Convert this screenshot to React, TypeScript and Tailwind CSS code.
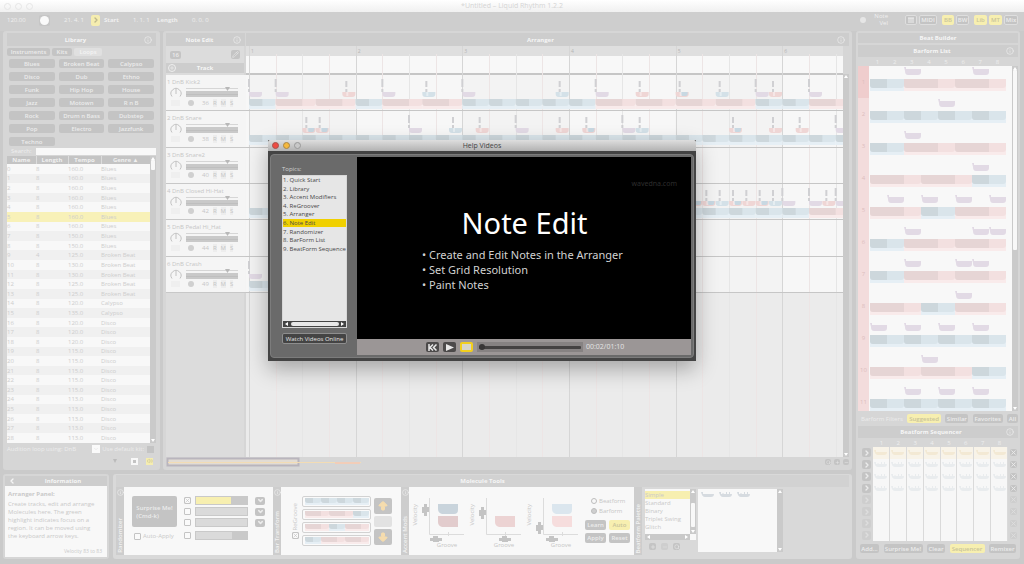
import React from 'react'

import { clsx } from 'clsx'
import {
  ArrowBigDown,
  ArrowBigUp,
  ChevronDown,
  ChevronLeft,
  ChevronRight,
  Info,
  Minus,
  Pencil,
  Plus,
  Search,
  Volume2,
  X,
} from 'lucide-react'

type Tone = 'blue' | 'red'
type NoteTone = 'purple' | 'blue' | 'red' | 'mix'
// start, length, tone
type Bar = [number, number, Tone]
type Note = [number, NoteTone]

interface ITrack {
  name: string
  channel: number
  color: string
  bars: Bar[]
  notes: Note[]
}

interface IBarform {
  bars: Bar[]
  notes: number[]
}

const GENRES = [
  'Blues', 'Broken Beat', 'Calypso', 'Disco', 'Dub', 'Ethno', 'Funk', 'Hip Hop', 'House', 'Jazz',
  'Motown', 'R n B', 'Rock', 'Drum n Bass', 'Dubstep', 'Pop', 'Electro', 'Jazzfunk', 'Techno',
]

const LOOPS: [string, string, string][] = [
  ...Array.from({ length: 7 }, () => ['8', '160.0', 'Blues'] as [string, string, string]),
  ['8', '150.0', 'Blues'],
  ['8', '150.0', 'Blues'],
  ['4', '125.0', 'Broken Beat'],
  ['8', '130.0', 'Broken Beat'],
  ['8', '130.0', 'Broken Beat'],
  ['8', '125.0', 'Broken Beat'],
  ['8', '125.0', 'Broken Beat'],
  ['8', '120.0', 'Calypso'],
  ['8', '135.0', 'Calypso'],
  ['8', '120.0', 'Disco'],
  ['8', '120.0', 'Disco'],
  ['8', '120.0', 'Disco'],
  ...Array.from({ length: 5 }, () => ['8', '115.0', 'Disco'] as [string, string, string]),
  ...Array.from({ length: 5 }, () => ['8', '113.0', 'Disco'] as [string, string, string]),
]

const blues = (count: number): Bar[] => Array.from({ length: count }, (_, i) => [i * 2, 2, 'blue'])

const TRACKS: ITrack[] = [
  {
    name: '1 DnB Kick2',
    channel: 36,
    color: 'bg-[#d6d5e2]',
    bars: [
      [0, 2, 'blue'], [2, 3, 'red'], [5, 3, 'red'], [8, 2, 'blue'], [10, 3, 'red'], [13, 3, 'red'],
      [16, 2, 'blue'], [18, 2, 'blue'], [20, 2, 'blue'], [22, 2, 'blue'], [24, 2, 'blue'],
      [26, 3, 'red'], [29, 3, 'red'], [32, 3, 'red'], [35, 3, 'red'], [38, 2, 'blue'],
      [40, 2, 'blue'], [42, 3, 'red'],
    ],
    notes: [
      [0, 'purple'], [2, 'purple'], [7, 'red'], [10, 'purple'], [13, 'blue'], [16, 'purple'],
      [23, 'blue'], [26, 'purple'], [29, 'red'], [32, 'mix'], [35, 'blue'], [38, 'purple'],
      [39, 'red'], [42, 'purple'],
    ],
  },
  {
    name: '2 DnB Snare',
    channel: 38,
    color: 'bg-[#e9cfcf]',
    bars: blues(23),
    notes: [
      [4, 'mix'], [5, 'mix'], [12, 'purple'], [15, 'blue'], [17, 'red'], [20, 'purple'],
      [23, 'red'], [25, 'mix'], [28, 'purple'], [29, 'blue'], [36, 'mix'], [39, 'red'],
      [41, 'red'], [44, 'purple'],
    ],
  },
  { name: '3 DnB Snare2', channel: 40, color: 'bg-[#e5cccc]', bars: [], notes: [] },
  {
    name: '4 DnB Closed Hi-Hat',
    channel: 42,
    color: 'bg-[#f5efb8]',
    bars: [...blues(21), [42, 3, 'red']],
    notes: [
      [33, 'mix'], [34, 'mix'], [35, 'blue'], [36, 'mix'], [37, 'red'], [38, 'mix'], [39, 'blue'],
      [40, 'purple'], [42, 'purple'], [43, 'red'], [44, 'purple'],
    ],
  },
  { name: '5 DnB Pedal Hi_Hat', channel: 44, color: 'bg-[#f5efb8]', bars: [], notes: [] },
  { name: '6 DnB Crash', channel: 49, color: 'bg-[#f3cfc4]', bars: [[0, 2, 'blue']], notes: [[0, 'purple']] },
]

const BARFORMS: IBarform[] = [
  { bars: [[0, 2, 'blue'], [2, 3, 'red'], [5, 3, 'red']], notes: [2, 6] },
  { bars: blues(4), notes: [4] },
  { bars: [[0, 2, 'blue'], [2, 3, 'red'], [5, 3, 'red']], notes: [2] },
  { bars: [[0, 3, 'red'], [3, 3, 'red'], [6, 2, 'blue']], notes: [6] },
  { bars: [[0, 3, 'red'], [3, 2, 'blue'], [5, 3, 'red']], notes: [1, 3, 5, 7] },
  { bars: [[0, 2, 'blue'], [2, 3, 'red'], [5, 3, 'red']], notes: [2, 6, 7] },
  { bars: [[0, 2, 'blue'], [2, 3, 'red'], [5, 3, 'red']], notes: [2, 5, 6] },
  { bars: [[0, 3, 'red'], [3, 2, 'blue'], [5, 3, 'red']], notes: [5] },
  { bars: blues(4), notes: [0, 2, 4, 6] },
  { bars: [[0, 3, 'red'], [3, 3, 'red'], [6, 2, 'blue']], notes: [3] },
  { bars: blues(4), notes: [2, 4, 6] },
]

const TOPICS = [
  'Quick Start', 'Library', 'Accent Modifiers', 'ReGroover', 'Arranger', 'Note Edit', 'Randomizer',
  'BarForm List', 'BeatForm Sequence',
]

const DARK = { blue: '#cdd7dc', red: '#e6d5d5' }
const LIGHT = { blue: '#dae5eb', red: '#f3e0e0' }
const UNDER = { blue: '#e6eff5', red: '#f9ebeb' }
const NOTE = { purple: '#e2dae5', red: '#efd6d5', blue: '#d4e1e8', mix: '#efd6d5' }

const wedge = (x: number, y: number, w: number, h: number) =>
  `M${x} ${y}h${w}v${h - 3}q0 3 -3 3h${6 - w}q-3 0 -3 -3z`

interface IBars {
  bars: Bar[]
  unit: number
  left: number
  top: number
  height: number
  under?: number
}

const Bars: React.FC<IBars> = ({ bars, unit, left, top, height, under = 3 }) => (
  <>
    {bars.map(([start, length, tone]) => {
      const x = left + start * unit
      const w = length * unit
      const dark = (length - 1) * unit
      return (
        <g key={start}>
          <rect x={x} y={top} width={w} height={height + under} fill={UNDER[tone]} />
          <path d={wedge(x, top, w, height)} fill={LIGHT[tone]} />
          <path d={`M${x} ${top}h${dark}v${height}h${3 - dark}q-3 0 -3 -3z`} fill={DARK[tone]} />
        </g>
      )
    })}
  </>
)

const Title: React.FC<{ children: React.ReactNode; info?: boolean; className?: string }> = ({
  children,
  info,
  className,
}) => (
  <div className={clsx('relative flex items-center justify-center bg-[#cdcdcd] font-bold text-[#f6f6f6]', className)}>
    {children}
    {info && <Info className="absolute right-1 text-[#efefef]" size={8} />}
  </div>
)

const Small: React.FC<React.ButtonHTMLAttributes<HTMLButtonElement> & { active?: boolean }> = ({
  active,
  className,
  ...props
}) => (
  <button
    type="button"
    className={clsx(
      'flex items-center justify-center whitespace-nowrap rounded-[2px] font-semibold',
      active ? 'bg-[#f7efb0] text-[#c9c49b]' : 'bg-[#c4c4c4] text-[#ececec]',
      className,
    )}
    {...props}
  />
)

const CheckBox: React.FC<{ checked?: boolean } & React.InputHTMLAttributes<HTMLInputElement>> = ({
  checked,
  ...props
}) => (
  <span className="relative flex size-[7px]">
    <input
      type="checkbox"
      defaultChecked={checked}
      className="size-[7px] appearance-none rounded-[1px] border border-[#c4c4c4] bg-[#fafafa]"
      {...props}
    />
    {checked && <X className="pointer-events-none absolute inset-0 text-[#bdbdbd]" size={7} />}
  </span>
)

const ScrollBar: React.FC<{ thumb: string }> = ({ thumb }) => (
  <div className="flex w-[6px] shrink-0 flex-col items-center justify-between bg-[#cacaca] py-[1px]">
    <svg width="4" height="3"><path d="M0 3L2 0L4 3z" fill="#fff" /></svg>
    <div className={clsx('w-[4px] rounded-[1px] bg-[#f8f8f8]', thumb)} />
    <div className="flex-1" />
    <svg width="4" height="3"><path d="M0 0L2 3L4 0z" fill="#fff" /></svg>
  </div>
)

const Strip: React.FC<{ children: string; icon?: boolean }> = ({ children, icon = true }) => (
  <div className="flex w-[8px] shrink-0 flex-col items-center justify-between bg-[#cdcdcd] py-[2px] text-[#f2f2f2]">
    {icon ? <Info size={7} /> : <span />}
    <span className="rotate-180 whitespace-nowrap font-semibold [writing-mode:vertical-rl]">{children}</span>
  </div>
)

const Toolbar: React.FC = () => (
  <div className="flex h-[19px] items-center bg-[#cecece] pb-[3px] pl-[7px] pr-[6px] text-[#f0f0f0]">
    <span className="w-[32px]">120.00</span>
    <button type="button" aria-label="Record" className="flex h-[11px] w-[11px] items-center justify-center rounded-[2px] bg-[#c6c6c6]">
      <span className="size-[9px] rounded-full bg-[#fafafa]" />
    </button>
    <span className="ml-[14px] w-[27px]">21. 4. 1</span>
    <button type="button" aria-label="Play" className="flex h-[11px] w-[9px] items-center justify-center rounded-[2px] bg-[#f5edb0] text-[#bdb88c]">
      <ChevronRight size={8} strokeWidth={4} />
    </button>
    <span className="ml-[4px] w-[29px] font-bold">Start</span>
    <span className="w-[24px]">1. 1. 1</span>
    <span className="w-[35px] font-bold">Length</span>
    <span>0. 0. 0</span>

    <div className="ml-auto flex items-center">
      <span className="mr-[8px] size-[6px] rounded-full bg-[#e6e6e6]" />
      <span className="mr-[17px] text-right leading-[7px]">
        Note
        <br />
        Vel
      </span>
      <Small aria-label="Mixer view" className="mr-[2px] h-[10px] w-[12px] border border-[#dedede]">
        <svg width="6" height="6"><path d="M0 1h6M1 1v5M3 1v5M5 1v5" stroke="#eee" fill="none" /></svg>
      </Small>
      <Small className="mr-[5px] h-[10px] w-[18px] border border-[#dedede]">MIDI</Small>
      <Small className="mr-[2px] h-[10px] w-[12px]" active>BB</Small>
      <Small className="mr-[5px] h-[10px] w-[13px] border border-[#dedede]">BW</Small>
      <Small className="mr-[2px] h-[10px] w-[13px]" active>Lib</Small>
      <Small className="mr-[2px] h-[10px] w-[13px]" active>MT</Small>
      <Small className="h-[10px] w-[14px] border border-[#dedede]">Mix</Small>
    </div>
  </div>
)

const Library: React.FC = () => (
  <section className="flex w-[157px] shrink-0 flex-col rounded-[3px] bg-[#d6d6d6] px-[4px] pb-[3px] pt-[2px]">
    <Title className="h-[13px] pr-[12px]" info>Library</Title>
    <div className="mt-[2px] flex h-[8px] gap-[2px]">
      <Small className="w-[43px]">Instruments</Small>
      <Small className="w-[20px]">Kits</Small>
      <button type="button" className="w-[28px] rounded-[2px] bg-[#e0e0e0] font-semibold text-[#f4f4f4]">Loops</button>
    </div>
    <div className="mt-[3px] grid grid-cols-3 gap-[4px] px-[2px]">
      {GENRES.map((genre) => (
        <Small key={genre} className="h-[9px]">{genre}</Small>
      ))}
    </div>
    <label className="mt-[1px] flex h-[8px] items-center gap-[4px] pl-[4px] text-[#efefef]">
      Search:
      <input className="h-[7px] min-w-0 flex-1 bg-[#f8f8f8]" />
    </label>
    <div className="mt-[1px] flex">
      <table className="h-[287px] flex-1 table-fixed border-collapse bg-[#f8f8f8] text-[#cdcdcd]">
        <thead>
          <tr className="h-[8px] bg-[#c4c4c4] leading-[8px] text-[#f0f0f0]">
            <th className="w-[29px] border-r border-[#dcdcdc]">Name</th>
            <th className="w-[32px] border-r border-[#dcdcdc]">Length</th>
            <th className="w-[33px] border-r border-[#dcdcdc]">Tempo</th>
            <th>Genre ▲</th>
          </tr>
        </thead>
        <tbody>
          {LOOPS.map(([length, tempo, genre], index) => (
            <tr
              key={index}
              className={clsx('leading-[8px]', index === 5 ? 'bg-[#f8f1b8]' : index % 2 === 1 && 'bg-[#f0f0f0]')}
            >
              <td className="p-0">{index}</td>
              <td className="p-0">{length}</td>
              <td className="p-0">{tempo}</td>
              <td className="p-0">{genre}</td>
            </tr>
          ))}
        </tbody>
      </table>
      <ScrollBar thumb="h-[10px]" />
    </div>
    <div className="flex h-[12px] items-center text-[#ededed]">
      <label htmlFor="kit">Audition loop using: DnB</label>
      <button id="kit" type="button" aria-label="Choose kit" className="ml-auto mr-[2px] flex size-[8px] items-center justify-center bg-[#fafafa] text-[#ddd]">
        <ChevronDown size={6} />
      </button>
      <label htmlFor="default-kit">Use default kit:</label>
      <input id="default-kit" type="checkbox" className="ml-[3px] mr-[2px] size-[7px] appearance-none bg-[#c4c4c4]" />
    </div>
    <div className="flex h-[12px] items-center justify-end gap-[8px] pr-[3px]">
      <svg className="mr-[6px]" width="4" height="4"><path d="M0 0h4L2 4z" fill="#bbb" /></svg>
      <button type="button" aria-label="Stop" className="flex size-[7px] items-center justify-center bg-[#f8f8f8]">
        <span className="size-[3px] bg-[#c4c4c4]" />
      </button>
      <button type="button" aria-label="Audition" className="flex size-[7px] items-center justify-center bg-[#f5edb0] text-[#c4bf95]">
        <Volume2 size={6} />
      </button>
    </div>
  </section>
)

const TrackHead: React.FC<{ track: ITrack }> = ({ track }) => (
  <div className="flex border-b border-[#c8c8c8] bg-[#f5f5f5] text-[#c6c6c6]">
    <div className="min-w-0 flex-1 px-[1px] pt-[3px]">
      <div className="flex h-[8px] items-center justify-between whitespace-nowrap">
        {track.name}
        <Pencil size={5} />
      </div>
      <div className="flex items-end gap-[4px] pl-[3px]">
        <svg width="12" height="12">
          <path d="M2 10.500A5 5 0 1 1 10 10.500M6 3v5" fill="none" stroke="#c2c2c2" />
        </svg>
        <svg className="flex-1" height="12">
          <path d="M0 2.500H52" stroke="#d6d6d6" />
          <path d="M39 1h5L41.500 5z" fill="#b8b8b8" />
          <rect y="5" width="52" height="6" fill="#c9c9c9" />
          <path d="M0 8.500H52" stroke="#bfbfbf" />
        </svg>
      </div>
      <div className="flex h-[9px] items-center gap-[4px] pl-[4px]">
        <span className="h-[6px] w-[9px] bg-[#efefef]" />
        <span className="ml-[4px] mr-[4px] size-[6px] rounded-full bg-[#d0d0d0]" />
        <span>{track.channel}</span>
        <span className="bg-[#ededed]">R</span>
        <span className="bg-[#ededed]">M</span>
        <span className="bg-[#ededed]">S</span>
      </div>
    </div>
    <div className={clsx('w-[4px]', track.color)} />
  </div>
)

const STEP = 40 / 3

const TrackLane: React.FC<{ track: ITrack }> = ({ track }) => (
  <div className="overflow-hidden border-b border-[#c6c6c6]">
    <svg className="block h-[35px] w-full">
      <Bars bars={track.bars} unit={STEP} left={3} top={24} height={7} />
      {track.notes.map(([at, tone]) => {
        const x = 3 + at * STEP
        return (
          <g key={at}>
            <path d={wedge(x, 17, 13, 5)} fill={NOTE[tone]} />
            {tone === 'mix' && <path d={`M${x + 5} 17h7v2q0 2 -2 2h-3q-2 0 -2 -4z`} fill="#c8d8e2" />}
            {tone !== 'purple' && <rect x={x + 4} y={17} width={2} height={4} fill="#fff" opacity=".4" />}
            <path
              d={tone === 'purple' ? `M${x} 4v8M${x} 14v3` : `M${x + 4} 6v6M${x + 4} 14v3`}
              stroke="#d0d0d3"
              strokeWidth="2"
            />
          </g>
        )
      })}
    </svg>
  </div>
)

const Lanes: React.FC = () => (
  <div className="relative min-w-0 flex-1 overflow-hidden bg-[#ebebeb]">
    <div className="h-[10px] bg-[#dfdfdf]" />
    <div className="h-[17px] bg-[#f8f8f8]" />
    <div className="h-[2px] bg-[#c6c6c6]" />
    <div className="h-[218px] bg-[#f7f7f7]" />
    <svg className="absolute inset-0 h-full w-full">
      {[0, 2, 4].map((bar) => (
        <rect key={bar} x={3 + bar * 8 * STEP} y={29} width={8 * STEP} height={218} fill="#f3f3f3" />
      ))}
      {Array.from({ length: 23 }, (_, i) => (
        <path
          key={i}
          d={`M${Math.round(3 + i * 2 * STEP) + 0.5} ${i % 4 ? 8 : 0}V420`}
          stroke={i % 4 === 0 ? '#d6d6d6' : i % 2 ? '#ede5e5' : '#e6e6e6'}
        />
      ))}
      {[1, 2, 3, 4, 5, 6].map((bar, i) => (
        <text key={bar} x={5 + i * 8 * STEP} y={7} fontSize={5} fill="#b5b5b5">{bar}</text>
      ))}
    </svg>
    <div className="absolute inset-x-0 top-[29px] grid h-[218px] auto-rows-fr">
      {TRACKS.map((track) => (
        <TrackLane key={track.name} track={track} />
      ))}
    </div>
  </div>
)

const Arranger: React.FC = () => (
  <section className="flex min-w-0 flex-1 flex-col rounded-[3px] bg-[#d6d6d6] px-[3px] pb-[3px] pt-[2px]">
    <div className="flex gap-[1px]">
      <Title className="h-[13px] w-[79px] pr-[12px]" info>Note Edit</Title>
      <Title className="h-[13px] flex-1 pr-[14px]" info>Arranger</Title>
    </div>
    <div className="flex flex-1 gap-[2px]">
      <div className="w-[78px] bg-[#dcdcdc]">
        <div className="flex h-[17px] items-center justify-between px-[4px]">
          <Small className="h-[8px] w-[11px]">16</Small>
          <Small aria-label="Draw notes" className="size-[9px]"><Pencil size={7} /></Small>
        </div>
        <Title className="h-[10px]">
          <Plus className="absolute left-[2px] rounded-full border border-[#eee]" size={8} />
          Track
        </Title>
        <div className="h-[2px] bg-[#dcdcdc]" />
        <div className="grid h-[218px] auto-rows-fr">
          {TRACKS.map((track) => (
            <TrackHead key={track.name} track={track} />
          ))}
        </div>
      </div>
      <div className="flex min-w-0 flex-1">
        <Lanes />
        <div className="flex pt-[28px]"><ScrollBar thumb="h-0" /></div>
      </div>
    </div>
    <div className="flex h-[10px] items-center">
      <svg className="h-[10px] flex-1">
        <rect x="1.500" y="1.500" width="131" height="7" fill="#e2dcd4" stroke="#b9b5bd" strokeWidth="2" />
        <path d="M2 5.500H195" stroke="#f3dcb4" />
        <path d="M169 6H194" stroke="#f2cdb8" strokeWidth="2" />
      </svg>
      <div className="flex gap-[3px] text-[#eee]">
        <Small aria-label="Zoom" className="size-[6px]"><Search size={5} /></Small>
        <Small aria-label="Zoom in" className="size-[6px]"><Plus size={5} /></Small>
        <Small aria-label="Zoom out" className="size-[6px]"><Minus size={5} /></Small>
      </div>
    </div>
  </section>
)

const Information: React.FC = () => (
  <section className="flex w-[106px] shrink-0 flex-col rounded-[3px] bg-[#d6d6d6] px-[2px] pb-[2px] pt-[2px]">
    <Title className="h-[10px] pl-[14px]">
      <ChevronLeft className="absolute left-[3px]" size={8} strokeWidth={4} />
      Information
    </Title>
    <div className="flex flex-1 flex-col bg-[#f8f8f8] px-[3px] pb-[2px] pt-[4px] text-[#c9c9c9]">
      <h3 className="font-bold">Arranger Panel:</h3>
      <p className="mt-[2px] leading-[8px]">
        Create tracks, edit and arrange
        <br />
        Molecules here. The green
        <br />
        highlight indicates focus on a
        <br />
        region. It can be moved using
        <br />
        the keyboard arrow keys.
      </p>
      <p className="mt-auto pr-[2px] text-right text-[5px]">Velocity 83 to 83</p>
    </div>
  </section>
)

const Randomizer: React.FC = () => (
  <div className="flex w-[149px] shrink-0 bg-[#f8f8f8] pl-[8px] pt-[9px] text-[#c9c9c9]">
    <div className="w-[52px]">
      <Small className="h-[31px] w-[45px] text-left">
        Surprise Me!
        <br />
        (Cmd-k)
      </Small>
      <label className="mt-[5px] flex items-center gap-[2px] pl-[2px]">
        <CheckBox />
        Auto-Apply
      </label>
    </div>
    <div className="flex flex-col gap-[2px]">
      {[
        { label: 'Amount', fill: 'w-[35px] bg-[#f7efb0]', checked: true },
        { label: 'Range', fill: 'w-[52px] bg-[#dadada]' },
        { label: 'Density', fill: 'w-[52px] bg-[#dadada]' },
        { label: 'Swing', fill: 'w-[36px] bg-[#dadada]' },
      ].map(({ label, fill, checked }, index) => (
        <div key={label} className={clsx('flex h-[9px] items-center gap-[4px]', index === 3 && 'mt-[2px]')}>
          <CheckBox aria-label={label} checked={checked} />
          <div className="flex h-[9px] w-[53px] border border-[#c9c9c9] bg-[#c9c9c9]">
            <div className={fill} />
          </div>
          {index < 3 && (
            <Small aria-label={`${label} options`} className="ml-[3px] h-[8px] w-[10px]">
              <ChevronDown size={7} strokeWidth={5} />
            </Small>
          )}
        </div>
      ))}
    </div>
  </div>
)

const BarTransform: React.FC = () => (
  <div className="flex w-[120px] shrink-0 items-center gap-[3px] bg-[#f8f8f8] pl-[10px] text-[#c9c9c9]">
    <div className="flex flex-col items-center gap-[2px]">
      <span className="rotate-180 [writing-mode:vertical-rl]">ReGroove</span>
      <CheckBox aria-label="Use ReGroove" checked />
    </div>
    <div className="flex flex-col gap-[2px]">
      {[BARFORMS[1], BARFORMS[3], BARFORMS[4], BARFORMS[0]].map((form, index) => (
        <div key={index} className="h-[11px] w-[69px] rounded-[2px] border border-[#d2d2d2] bg-[#fafafa]">
          <svg className="block" width="67" height="9">
            <Bars bars={form.bars} unit={8} left={2} top={1} height={5} under={2} />
          </svg>
        </div>
      ))}
    </div>
    <div className="flex flex-col gap-[2px]">
      <Small aria-label="Up" className="h-[16px] w-[18px]"><ArrowBigUp size={12} color="#f5dcae" fill="#f5dcae" /></Small>
      <span className="h-[11px] rounded-[2px] bg-[#e2e2e2]" />
      <Small aria-label="Down" className="h-[16px] w-[18px]"><ArrowBigDown size={12} color="#f5dcae" fill="#f5dcae" /></Small>
    </div>
  </div>
)

interface IAccent {
  top?: string
  bottom: string
  knobY: number
  knobX: number
}

const Accent: React.FC<IAccent> = ({ top, bottom, knobY, knobX }) => (
  <div className="flex w-[57px] gap-[1px]">
    <span className="mt-[8px] rotate-180 self-start [writing-mode:vertical-rl]">Velocity</span>
    <div className="text-center">
      <svg className="block" width="46" height="46">
        <path d="M9.500 2V38.500H44M28.500 36v4" fill="none" stroke="#dcdcdc" />
        {top && <path d="M18 8h20v6q0 4 -4 4h-12q-4 -1 -4 -5z" fill={top} />}
        <path d="M18 20h20v11h-16q-4 -1 -4 -5z" fill={bottom} />
        <path d={`M4 ${knobY - 6}h3v3h2v5h-2v4h-3v-3h-2v-6h2z`} fill="#c4c4c4" />
        <path d={`M${knobX - 6} 42h3v-2h5v2h4v3h-3v1h-6v-1h-3z`} fill="#c4c4c4" />
      </svg>
      <span className="block pl-[8px] leading-[6px]">Groove</span>
    </div>
  </div>
)

const AccentMods: React.FC = () => (
  <div className="flex w-[225px] shrink-0 bg-[#f8f8f8] pl-[2px] pt-[9px] text-[#c6c6c6]">
    <Accent top="#c9d4dc" bottom="#e2cccd" knobY={14} knobX={16} />
    <Accent bottom="#ecd3d3" knobY={17} knobX={28} />
    <Accent top="#dbe6ee" bottom="#f6dddd" knobY={32} knobX={18} />
    <div className="flex flex-col gap-[2px] pl-[3px] pt-[1px]">
      {['Beatform', 'Barform'].map((mode) => (
        <label key={mode} className="ml-[6px] flex h-[8px] items-center gap-[2px]">
          <input
            type="radio"
            name="mode"
            defaultChecked={mode === 'Barform'}
            className="size-[6px] appearance-none rounded-full border border-[#bdbdbd] checked:bg-[#cfcfcf]"
          />
          {mode}
        </label>
      ))}
      <div className="mt-[3px] grid grid-cols-2 gap-[3px]">
        <Small className="h-[10px] w-[21px]">Learn</Small>
        <Small className="h-[10px] w-[21px]" active>Auto</Small>
        <Small className="h-[10px] w-[21px]">Apply</Small>
        <Small className="h-[10px] w-[21px]">Reset</Small>
      </div>
    </div>
  </div>
)

// little beatform glyph used by the palette and the sequencer
const Molecule: React.FC<{ color?: string; stems?: boolean }> = ({ color = '#d6dbe0', stems }) => (
  <svg width="13" height="7">
    <path d="M0 1h2v2h11q0 3 -3 3h-6q-3 0 -4 -5z" fill={color} />
    {stems && <path d="M4 3v-1M7.500 3v-2M10.500 3v-2" stroke={color} />}
  </svg>
)

const Palette: React.FC = () => (
  <div className="flex gap-[2px] pl-[3px] pt-[2px] text-[#c9c9c9]">
    <div className="w-[51px]">
      <div className="flex h-[45px] bg-[#f8f8f8]">
        <ul className="flex-1 pt-[2px]">
          {['Simple', 'Standard', 'Binary', 'Triplet Swing', 'Glitch'].map((name, index) => (
            <li key={name}>
              <button
                type="button"
                className={clsx('block h-[8px] w-full whitespace-nowrap text-left leading-[8px]', index === 0 && 'bg-[#f7efb0]')}
              >
                {name}
              </button>
            </li>
          ))}
        </ul>
        <ScrollBar thumb="mt-[10px] h-[24px]" />
      </div>
      <div className="flex h-[6px] bg-[#f8f8f8]">
        <div className="flex w-[45px] items-center justify-between bg-[#c9c9c9] px-[2px]">
          <svg width="3" height="4"><path d="M3 0v4L0 2z" fill="#fff" /></svg>
          <svg width="3" height="4"><path d="M0 0v4L3 2z" fill="#fff" /></svg>
        </div>
      </div>
      <div className="mt-[3px] flex gap-[5px] pl-[4px]">
        <Small aria-label="Add beatform" className="size-[7px]"><Plus size={6} /></Small>
        <Small aria-label="Remove beatform" className="size-[7px] opacity-50"><Minus size={6} /></Small>
        <Small aria-label="Find beatform" className="size-[7px]"><Search size={6} /></Small>
      </div>
    </div>
    <div className="flex h-[63px] w-[85px] bg-[#f8f8f8]">
      <div className="flex flex-1 gap-[5px] pl-[3px] pt-[2px]">
        <Molecule />
        <Molecule stems />
        <Molecule stems />
      </div>
      <ScrollBar thumb="h-0" />
    </div>
  </div>
)

const MoleculeTools: React.FC = () => (
  <section className="flex min-w-0 flex-1 flex-col rounded-[3px] bg-[#d9d9d9] px-[3px] pb-[4px] pt-[1px]">
    <Title className="h-[12px] bg-[#d2d2d2]">Molecule Tools</Title>
    <div className="flex flex-1 overflow-hidden">
      <Strip>Randomizer</Strip>
      <Randomizer />
      <Strip>Bar Transform</Strip>
      <BarTransform />
      <Strip>Accent Mods</Strip>
      <AccentMods />
      <Strip icon={false}>Beatform Palette</Strip>
      <Palette />
    </div>
  </section>
)

const Numbers: React.FC<{ className: string }> = ({ className }) => (
  <div className={clsx('grid h-[9px] grid-cols-8 items-center text-center text-[#eee]', className)}>
    {[1, 2, 3, 4, 5, 6, 7, 8].map((n) => (
      <span key={n}>{n}</span>
    ))}
  </div>
)

const BeatBuilder: React.FC = () => (
  <aside className="flex w-[164px] shrink-0 flex-col rounded-[3px] bg-[#d6d6d6] px-[2px] pt-[2px]">
    <Title className="h-[10px]">Beat Builder</Title>
    <Title className="mt-[2px] h-[12px] pr-[12px]" info>Barform List</Title>
    <Numbers className="ml-[11px] mr-[12px]" />
    <div className="flex h-[345px] overflow-hidden">
      <div className="w-[11px] shrink-0 bg-[#f3dcdc] text-center text-[#dcbebe]">
        {BARFORMS.map((_, index) => (
          <div key={index} className={clsx('flex h-[32px] items-center justify-center', index === 0 && 'bg-[#efcdcd]')}>
            {index + 1}
          </div>
        ))}
      </div>
      <div className="flex-1 bg-[#f8f8f8]">
        {BARFORMS.map(({ bars, notes }, index) => (
          <svg key={index} className="block h-[32px] w-full">
            {notes.map((at) => (
              <path key={at} d={`M${1 + at * 17} 1h2v2h15v3q0 3 -3 3h-10q-3 0 -3 -4z`} fill="#e2dae5" />
            ))}
            <Bars bars={bars} unit={17} left={1} top={13} height={9} />
          </svg>
        ))}
      </div>
      <ScrollBar thumb="h-[180px]" />
    </div>
    <div className="flex h-[15px] items-center justify-between pl-[3px] text-[#ececec]">
      <span className="whitespace-nowrap">Barform Filters</span>
      <Small className="h-[9px] w-[34px]" active>Suggested</Small>
      <Small className="h-[9px] w-[23px]">Similar</Small>
      <Small className="h-[9px] w-[30px]">Favorites</Small>
      <Small className="h-[9px] w-[11px]">All</Small>
    </div>
    <Title className="h-[12px] pr-[14px]" info>Beatform Sequencer</Title>
    <Numbers className="ml-[15px] mr-[10px]" />
    <div className="flex h-[94px] gap-[2px] pl-[4px]">
      <div className="grid w-[9px] auto-rows-fr items-center">
        {Array.from({ length: 8 }, (_, i) => (
          <Small key={i} aria-label={`Play row ${i + 1}`} className={clsx('size-[9px]', i > 3 && 'opacity-40')}>
            <ChevronRight size={8} strokeWidth={4} />
          </Small>
        ))}
      </div>
      <div className="grid flex-1 auto-rows-fr grid-cols-8 bg-[#f7f7f7]">
        {Array.from({ length: 64 }, (_, i) => (
          <div
            key={i}
            className={clsx('flex items-center justify-center border-r border-[#dadada]', i < 8 && 'bg-[#f8f3e8]')}
          >
            {i < 32 && <Molecule color={i < 8 ? '#f3e9d4' : '#e9ecee'} stems={i > 7} />}
          </div>
        ))}
      </div>
      <div className="grid w-[8px] auto-rows-fr items-center">
        {Array.from({ length: 8 }, (_, i) => (
          <Small key={i} aria-label={`Clear row ${i + 1}`} className={clsx('size-[7px]', i > 3 && 'opacity-40')}>
            <X size={7} strokeWidth={3} />
          </Small>
        ))}
      </div>
    </div>
    <div className="flex h-[15px] items-center justify-between px-[2px]">
      <Small className="h-[9px] w-[19px]">Add...</Small>
      <Small className="h-[9px] w-[39px]">Surprise Me!</Small>
      <Small className="h-[9px] w-[18px]">Clear</Small>
      <Small className="h-[9px] w-[35px]" active>Sequencer</Small>
      <Small className="h-[9px] w-[27px]">Remixer</Small>
    </div>
  </aside>
)

const HelpVideos: React.FC = () => (
  <div
    role="dialog"
    aria-label="Help Videos"
    className="w-[428px] bg-[#444444] shadow-[0_8px_20px_rgba(0,0,0,0.3)]"
  >
    <div className="relative flex h-[11px] items-center justify-center rounded-t-[2px] bg-linear-to-b from-[#dedede] to-[#b2b2b2] text-[7px] text-[#444444]">
      <div className="absolute left-[4px] flex gap-[4px]">
        <button type="button" aria-label="Close" className="size-[7px] rounded-full border border-[#a5544d] bg-[#ee4b42]" />
        <button type="button" aria-label="Minimize" className="size-[7px] rounded-full border border-[#a98545] bg-[#f5b83d]" />
        <button type="button" aria-label="Zoom" className="size-[7px] rounded-full border border-[#999999] bg-[#c8c8c8]" />
      </div>
      Help Videos
    </div>
    <div className="px-[2px] pb-[3px] pt-[3px]">
      <div className="flex rounded-[4px] border border-[#7c7c7c] bg-[#6a6a6a] p-[2px]">
        <div className="flex w-[84px] shrink-0 flex-col px-[9px] pt-[8px]">
          <span className="text-[#d2d2d2]">Topics:</span>
          <div className="mt-[2px] flex h-[153px] w-[65px] flex-col border border-[#d8d8d8] bg-[#e6e6e6] text-[#484848]">
            <ul className="grid h-[77px] auto-rows-fr">
              {TOPICS.map((topic, index) => (
                <li key={topic} className={clsx('flex', index === 5 && 'bg-[#f0d000]')}>
                  <button type="button" className="flex-1 whitespace-nowrap text-left">
                    {index + 1}. {topic}
                  </button>
                </li>
              ))}
            </ul>
            <div className="mt-auto flex h-[6px] items-center justify-between bg-[#444444] px-[2px]">
              <svg width="3" height="4"><path d="M3 0v4L0 2z" fill="#fff" /></svg>
              <div className="h-[4px] w-[48px] rounded-[2px] bg-[#e8e8e8]" />
              <svg width="3" height="4"><path d="M0 0v4L3 2z" fill="#fff" /></svg>
            </div>
          </div>
          <button
            type="button"
            className="mt-[5px] h-[11px] w-[65px] whitespace-nowrap rounded-[2px] border border-[#8e8e8e] bg-[#444444] text-[#e4e4e4]"
          >
            Watch Videos Online
          </button>
        </div>
        <div className="flex-1">
          <div className="h-[182px] bg-black font-['Noto_Sans',sans-serif] text-white">
            <p className="pr-[14px] pt-[22px] text-right text-[7px] leading-[10px] text-[#2e2e2e]">wavedna.com</p>
            <h2 className="pl-[1px] pt-[14px] text-center text-[29px] leading-[40px]">Note Edit</h2>
            <ul className="pl-[65px] pt-[4px] text-[11px] leading-[15px] text-[#d2d2d2]">
              <li>• Create and Edit Notes in the Arranger</li>
              <li>• Set Grid Resolution</li>
              <li>• Paint Notes</li>
            </ul>
          </div>
          <div className="flex h-[16px] items-center bg-[#9b9696] pl-[69px] text-[7px] text-[#e4e4e4]">
            <button type="button" aria-label="Rewind" className="mr-[4px] flex h-[10px] w-[13px] items-center justify-center rounded-[2px] bg-[#4c4a4a]">
              <svg width="9" height="7">
                <path d="M1 0v7M5 0.500L2 3.500L5 6.500M8.500 0.500L5.500 3.500L8.500 6.500" fill="none" stroke="#e8e8e8" strokeWidth="1.500" />
              </svg>
            </button>
            <button type="button" aria-label="Play" className="mr-[4px] flex h-[10px] w-[13px] items-center justify-center rounded-[2px] bg-[#4c4a4a]">
              <svg width="8" height="7"><path d="M0 0L8 3.500L0 7z" fill="#e8e8e8" /></svg>
            </button>
            <button type="button" aria-label="Stop" className="mr-[4px] h-[10px] w-[13px] rounded-[2px] border-2 border-[#f2cf1d] bg-[#d8d6c8]" />
            <div className="mr-[3px] flex h-[10px] w-[106px] items-center bg-[#868282] px-[2px]">
              <input
                type="range"
                aria-label="Position"
                min={0}
                max={70}
                defaultValue={0}
                className="h-[3px] w-full appearance-none rounded-[1px] bg-[#444242] [&::-webkit-slider-thumb]:size-[6px] [&::-webkit-slider-thumb]:appearance-none [&::-webkit-slider-thumb]:rounded-full [&::-webkit-slider-thumb]:bg-[#383636]"
              />
            </div>
            <span>00:02/01:10</span>
          </div>
        </div>
      </div>
    </div>
  </div>
)

const App: React.FC = () => (
  <div className="relative flex min-h-screen flex-col bg-[#cacaca] font-['Open_Sans',sans-serif] text-[6px] leading-[8px]">
    <header className="relative flex h-[12px] items-center justify-center bg-linear-to-b from-white to-[#f0f0f0] text-[7px] text-[#d4d4d4]">
      <div className="absolute left-[4px] flex gap-[4px]">
        <span className="size-[7px] rounded-full border border-[#e6e6e6]" />
        <span className="size-[7px] rounded-full border border-[#e6e6e6]" />
        <span className="size-[7px] rounded-full border border-[#e6e6e6]" />
      </div>
      *Untitled – Liquid Rhythm 1.2.2
    </header>
    <Toolbar />
    <main className="flex flex-1 gap-[4px] pb-[5px] pl-[3px] pr-[4px]">
      <div className="flex min-w-0 flex-1 flex-col gap-[4px]">
        <div className="flex flex-1 gap-[3px]">
          <Library />
          <Arranger />
        </div>
        <div className="flex h-[85px] gap-[4px]">
          <Information />
          <MoleculeTools />
        </div>
      </div>
      <BeatBuilder />
    </main>
    <div className="absolute inset-x-0 top-[140px] flex justify-center pr-[60px]">
      <HelpVideos />
    </div>
  </div>
)

export default App
